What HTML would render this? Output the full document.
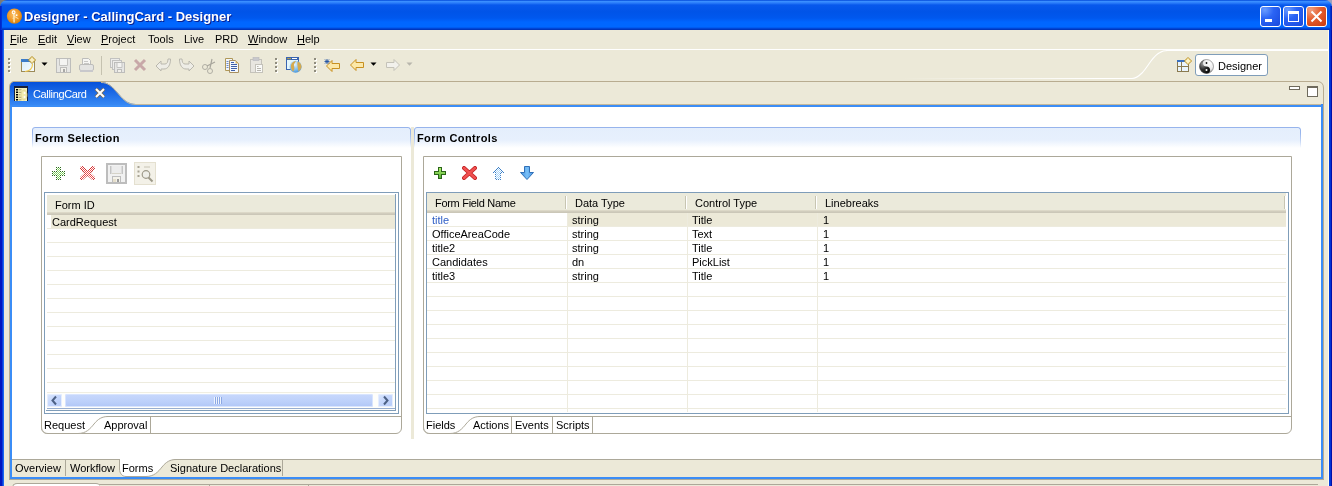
<!DOCTYPE html>
<html><head><meta charset="utf-8">
<style>
*{margin:0;padding:0;box-sizing:border-box}
body{will-change:transform}
html,body{width:1332px;height:486px;overflow:hidden;background:#ECE9D8;font-family:"Liberation Sans",sans-serif;font-size:11px;color:#000}
.a{position:absolute}
.t{position:absolute;white-space:nowrap;line-height:13px;font-size:11px}
#title{left:0;top:0;width:1332px;height:30px;border-radius:7px 7px 0 0;
 background:linear-gradient(#0046D8 0px,#3A8EFF 1.5px,#2A7CFA 3px,#0858EC 5px,#0054E8 12px,#0058EE 18px,#0066FF 22px,#0068FF 27px,#0050E4 28px,#003CC8 29px,#0030B0 30px)}
#corner{left:0;top:0;width:8px;height:8px;background:#7a7a7a}
.tb{position:absolute;top:6px;width:21px;height:21px;border:1px solid #fff;border-radius:3px}
.hl{position:absolute;height:1px}
.vl{position:absolute;width:1px}
.dots{position:absolute;width:3px}
.dots i{position:absolute;left:0;width:2px;height:2px;background:#8f8c7e;box-shadow:1px 1px 0 #fff}
.row{position:absolute;height:1px;background:#EDEBDE}
</style></head><body>
<!-- title bar -->
<div class="a" id="corner"></div><div class="a" style="left:1324px;top:0;width:8px;height:8px;background:#9aa0c0"></div>
<div class="a" id="title"></div>
<!-- app icon -->
<svg class="a" style="left:6px;top:8px" width="17" height="17">
 <defs><radialGradient id="ico" cx="0.45" cy="0.4" r="0.6"><stop offset="0" stop-color="#FBC068"/><stop offset="0.6" stop-color="#F09A28"/><stop offset="1" stop-color="#D8800A"/></radialGradient></defs>
 <circle cx="8.4" cy="8.1" r="7.6" fill="url(#ico)"/>
 <circle cx="7.6" cy="4.3" r="1.4" fill="none" stroke="#fff" stroke-width="1.1"/>
 <path d="M7.9 5.8 L8.1 14.5" stroke="#FFF4D0" stroke-width="1.2"/>
 <path d="M8 8.2 L12.5 10.8" stroke="#FFE8B0" stroke-width="0.9"/>
 <rect x="9.8" y="6.4" width="1.6" height="1.6" fill="#fff"/>
 <path d="M6.5 10.3 H8" stroke="#FFE8B0" stroke-width="0.8"/>
</svg>
<div class="t" style="left:24px;top:9px;font-size:13px;line-height:16px;font-weight:bold;color:#fff;text-shadow:1px 1px 0 #0A1F8F">Designer - CallingCard - Designer</div>
<!-- title buttons -->
<div class="tb" style="left:1260px;background:radial-gradient(circle at 20% 15%,#6A9CFF 0,#2B64F5 40%,#1848DC 100%)"><div class="a" style="left:4px;top:12px;width:7px;height:3px;background:#fff"></div></div>
<div class="tb" style="left:1283px;background:radial-gradient(circle at 20% 15%,#6A9CFF 0,#2B64F5 40%,#1848DC 100%)"><div class="a" style="left:4px;top:4px;width:11px;height:11px;border:1px solid #fff;border-top-width:3px"></div></div>
<div class="tb" style="left:1306px;background:radial-gradient(circle at 20% 15%,#F0A080 0,#E45C2C 45%,#C83A0E 100%)"><svg class="a" style="left:3px;top:3px" width="13" height="13"><path d="M1.5 1.5 L11.5 11.5 M11.5 1.5 L1.5 11.5" stroke="#fff" stroke-width="2"/></svg></div>
<!-- frame sides -->
<div class="a" style="left:0;top:30px;width:4px;height:456px;background:linear-gradient(90deg,#0016C0 0,#0016C0 2px,#0A3CDC 2px,#0A3CDC 3px,#1A68F0 3px)"></div><div class="a" style="left:0;top:6px;width:2px;height:24px;background:linear-gradient(90deg,#0020C8,#0038D8)"></div><div class="a" style="left:1330px;top:6px;width:2px;height:24px;background:linear-gradient(90deg,#0040D8,#0018B0)"></div>
<div class="a" style="left:1328px;top:30px;width:4px;height:456px;background:linear-gradient(90deg,#FFFBEF 0,#FFFBEF 1px,#0040E0 1px,#0030D0 3px,#0010A8 3px)"></div>

<!-- menu bar -->
<div class="t" style="left:10px;top:33px"><u>F</u>ile</div>
<div class="t" style="left:38px;top:33px"><u>E</u>dit</div>
<div class="t" style="left:67px;top:33px"><u>V</u>iew</div>
<div class="t" style="left:101px;top:33px"><u>P</u>roject</div>
<div class="t" style="left:148px;top:33px">Tools</div>
<div class="t" style="left:184px;top:33px">Live</div>
<div class="t" style="left:215px;top:33px">PRD</div>
<div class="t" style="left:248px;top:33px"><u>W</u>indow</div>
<div class="t" style="left:297px;top:33px"><u>H</u>elp</div>
<div class="hl" style="left:4px;top:49px;width:1324px;background:#fff"></div>

<!-- coolbar -->
<div class="hl" style="left:900px;top:78px;width:232px;background:linear-gradient(90deg,rgba(255,255,255,0),#fff 85%)"></div>
<svg class="a" style="left:1128px;top:48px" width="42" height="32"><path d="M0 30.5 L4 30.5 C8 30.5 11 28 14 25 C17 22 20 17 23 13 C26 9 29 6 32 4.5 C34 3 36 2.5 40 2.5 L42 2.5" stroke="#fff" stroke-width="1.1" fill="none"/></svg>
<div class="hl" style="left:1166px;top:50px;width:162px;background:#fff"></div>
<div class="hl" style="left:14px;top:81px;width:1304px;background:#ACA899"></div>

<!-- toolbar grips -->
<div class="dots" style="left:8px;top:58px;height:14px"><i style="top:0"></i><i style="top:4px"></i><i style="top:8px"></i><i style="top:12px"></i></div>
<div class="dots" style="left:275px;top:58px;height:14px"><i style="top:0"></i><i style="top:4px"></i><i style="top:8px"></i><i style="top:12px"></i></div>
<div class="dots" style="left:314px;top:58px;height:14px"><i style="top:0"></i><i style="top:4px"></i><i style="top:8px"></i><i style="top:12px"></i></div>
<!-- new -->
<svg class="a" style="left:20px;top:56px" width="18" height="17">
 <defs><linearGradient id="nw" x1="0" y1="0" x2="1" y2="1"><stop offset="0" stop-color="#D8EEFA"/><stop offset="1" stop-color="#F8FCFF"/></linearGradient></defs>
 <rect x="1.5" y="3.5" width="13" height="12" fill="url(#nw)" stroke="#9C8A58"/>
 <rect x="1" y="3" width="10" height="3" fill="#3C7CC8"/>
 <path d="M12 0.5 L15.5 4 L12 7.5 L8.5 4 Z" fill="#F0E0A0" stroke="#B08818"/>
 <path d="M12 1.5 V6.5 M9.5 4 H14.5" stroke="#FFF8D8" stroke-width="0.8"/>
 <path d="M12.5 8 C12.5 12 10 15 5 15.5" stroke="#F0C850" stroke-width="1.2" fill="none"/>
</svg>
<svg class="a" style="left:41px;top:62px" width="7" height="5"><path d="M0.5 0.5 L6.5 0.5 L3.5 3.8 Z" fill="#000"/></svg>
<!-- save (disabled) -->
<svg class="a" style="left:55px;top:57px" width="17" height="17">
 <rect x="1.5" y="1.5" width="14" height="14" fill="#E6E6E4" stroke="#BDBDBB"/>
 <path d="M4.5 2 V8.5 H12.5 V2" fill="#F4F4F2" stroke="#C4C4C2"/>
 <rect x="5.5" y="10.5" width="6" height="5" fill="#F2F0EA" stroke="#BDBDBB"/>
 <rect x="8" y="12" width="2" height="3" fill="#A8A8A6"/>
</svg>
<!-- print -->
<svg class="a" style="left:78px;top:57px" width="17" height="17">
 <path d="M4.5 8 V1.5 H10.5 L12.5 3.5 V8" fill="#F6F6F4" stroke="#BDBDBB"/>
 <path d="M6 4.5 H10 M6 6.5 H11" stroke="#C8C8C6"/>
 <rect x="1.5" y="7.5" width="14" height="6" rx="1.5" fill="#E4E4E2" stroke="#BDBDBB"/>
 <rect x="2" y="13" width="13" height="2" fill="#C8C8CC"/>
</svg>
<div class="vl" style="left:101px;top:56px;height:19px;background:#C5C2B0"></div>
<!-- save all -->
<svg class="a" style="left:109px;top:57px" width="17" height="17">
 <rect x="1.5" y="1.5" width="9" height="9" fill="#EDEDEB" stroke="#C2C2C0"/>
 <rect x="3.5" y="3.5" width="9" height="9" fill="#EDEDEB" stroke="#C2C2C0"/>
 <rect x="5.5" y="5.5" width="10" height="10" fill="#E6E6E4" stroke="#BDBDBB"/>
 <path d="M8 6 V10.5 H13 V6" fill="#F4F4F2" stroke="#C4C4C2"/>
 <rect x="8.5" y="12.5" width="4" height="3" fill="#F2F0EA" stroke="#BDBDBB"/>
</svg>
<!-- delete (disabled) -->
<svg class="a" style="left:133px;top:58px" width="15" height="14"><path d="M2 2 L12 12 M12 2 L2 12" stroke="#C8A8A8" stroke-width="3"/></svg>
<!-- undo -->
<svg class="a" style="left:155px;top:57px" width="17" height="16"><path d="M1 9 L6 4 L6 7 L10 7 C12 7 13 5 13 2 L15.5 2 C15.5 8 13 12 9 12 L6 12 L6 14 Z" fill="#EEEDE6" stroke="#BAB8AE"/></svg>
<!-- redo -->
<svg class="a" style="left:178px;top:57px" width="17" height="16"><path d="M16 9 L11 4 L11 7 L7 7 C5 7 4 5 4 2 L1.5 2 C1.5 8 4 12 8 12 L11 12 L11 14 Z" fill="#EEEDE6" stroke="#BAB8AE"/></svg>
<!-- cut -->
<svg class="a" style="left:201px;top:57px" width="16" height="17"><circle cx="4" cy="10" r="2.5" fill="none" stroke="#B0AEA4"/><circle cx="9" cy="14" r="2.5" fill="none" stroke="#B0AEA4"/><path d="M6 9 L14 5 M9 11 L11 2" stroke="#A8A69C" stroke-width="1.2"/></svg>
<!-- copy -->
<svg class="a" style="left:224px;top:57px" width="17" height="17">
 <path d="M1.5 1.5 L8.5 1.5 L8.5 13.5 L1.5 13.5 Z" fill="#F2F6FC" stroke="#B09858"/>
 <path d="M5.5 3.5 L11.5 3.5 L14.5 6.5 L14.5 15.5 L5.5 15.5 Z" fill="#F4F8FE" stroke="#A89060"/>
 <path d="M11.5 3.5 L11.5 6.5 L14.5 6.5 Z" fill="#D8B868"/>
 <path d="M7 5.5 H10 M7 7.5 H13 M7 9.5 H13 M7 11.5 H13 M7 13.5 H11" stroke="#4060A8"/>
 <path d="M2.5 4.5 H4.5 M2.5 6.5 H4.5 M2.5 8.5 H4.5 M2.5 10.5 H4.5" stroke="#6E8AC8"/>
</svg>
<!-- paste (disabled) -->
<svg class="a" style="left:249px;top:57px" width="16" height="17">
 <rect x="1.5" y="2.5" width="11" height="13" fill="#E8E6E0" stroke="#C4C2BA"/>
 <rect x="4" y="0.5" width="6" height="3" fill="#C8C8CC" stroke="#B8B8BC" stroke-width="0.6"/>
 <rect x="6.5" y="7.5" width="7" height="8" fill="#FAFAF8" stroke="#C4C2BA"/>
 <path d="M8 9.5 H9.5 M8 11.5 H12 M8 13.5 H12" stroke="#B8B6AE"/>
</svg>
<!-- web -->
<svg class="a" style="left:285px;top:56px" width="18" height="18">
 <defs><radialGradient id="gl" cx="0.4" cy="0.3" r="0.8"><stop offset="0" stop-color="#E8F6FF"/><stop offset="0.6" stop-color="#7CBCF0"/><stop offset="1" stop-color="#3A88D0"/></radialGradient></defs>
 <rect x="1.5" y="1.5" width="12" height="12" fill="#E4F6FC" stroke="#3A64B0"/>
 <rect x="1" y="1" width="13" height="3" fill="#3A64B0"/>
 <rect x="2.5" y="2" width="1.2" height="1.2" fill="#F0C020"/><rect x="4.5" y="2" width="1.2" height="1.2" fill="#F0C020"/><rect x="7" y="2" width="5" height="1" fill="#fff"/>
 <circle cx="10.6" cy="10.7" r="6" fill="url(#gl)"/>
 <path d="M6 9 C7 6 9 5 11 5 C10 7 8.5 8 9 10 C10 12 9 15 8 15.5 C6.5 14 5.5 11 6 9 Z" fill="#D4AA50"/>
 <path d="M12.5 5.5 C15 6 16.5 8.5 16.5 11 C16 13 14.5 15 13.5 15.5 C13 13 12 10 12.5 5.5 Z" fill="#D4AA50"/>
</svg>
<!-- last edit -->
<svg class="a" style="left:324px;top:58px" width="18" height="16">
 <path d="M2.5 8 L8 2.5 L8 5.5 L15.5 5.5 L15.5 10.5 L8 10.5 L8 13.5 Z" fill="#FCE8A8" stroke="#C89020"/>
 <path d="M3 1 V6 M0.5 3.5 H5.5 M1 1.5 L5 5.5 M5 1.5 L1 5.5" stroke="#2050A0" stroke-width="0.9"/>
</svg>
<!-- back -->
<svg class="a" style="left:349px;top:58px" width="16" height="15"><path d="M1.5 7 L7 1.5 L7 4.5 L14.5 4.5 L14.5 9.5 L7 9.5 L7 12.5 Z" fill="#FCE8A8" stroke="#C89020"/></svg>
<svg class="a" style="left:370px;top:62px" width="7" height="5"><path d="M0.5 0.5 L6.5 0.5 L3.5 3.8 Z" fill="#000"/></svg>
<!-- forward disabled -->
<svg class="a" style="left:385px;top:58px" width="16" height="15"><path d="M14.5 7 L9 1.5 L9 4.5 L1.5 4.5 L1.5 9.5 L9 9.5 L9 12.5 Z" fill="#F2F1EC" stroke="#C4C2B8"/></svg>
<svg class="a" style="left:406px;top:62px" width="7" height="5"><path d="M0.5 0.5 L6.5 0.5 L3.5 3.8 Z" fill="#B8B6AC"/></svg>
<!-- perspective -->
<svg class="a" style="left:1176px;top:57px" width="16" height="16">
 <rect x="1.5" y="3.5" width="11" height="11" fill="#EAF4FC" stroke="#8A7A50"/>
 <rect x="1" y="3" width="12" height="2" fill="#3A70C0"/>
 <path d="M5.5 5 V14 M2 9.5 H12" stroke="#8A7A50"/>
 <path d="M12 0.5 L15.5 4 L12 7.5 L8.5 4 Z" fill="#F8E8A8" stroke="#B88A18"/><path d="M12 1.5 V6.5 M9.5 4 H14.5" stroke="#FFFBE0" stroke-width="0.8"/>
</svg>
<div class="a" style="left:1195px;top:54px;width:73px;height:22px;border:1px solid #7F9DB9;border-radius:3px;background:#fff"></div>
<svg class="a" style="left:1199px;top:59px" width="16" height="16">
 <defs><radialGradient id="yw" cx="0.7" cy="0.25" r="0.8"><stop offset="0" stop-color="#fff"/><stop offset="0.55" stop-color="#E8E8E8"/><stop offset="1" stop-color="#707070"/></radialGradient>
 <radialGradient id="yb" cx="0.3" cy="0.3" r="0.9"><stop offset="0" stop-color="#9a9a9a"/><stop offset="0.45" stop-color="#303030"/><stop offset="1" stop-color="#000"/></radialGradient></defs>
 <circle cx="7.5" cy="7.5" r="7" fill="url(#yw)"/>
 <path d="M7.5 0.5 A7 7 0 0 0 7.5 14.5 A3.5 3.5 0 0 0 7.5 7.5 A3.5 3.5 0 0 1 7.5 0.5 Z" fill="url(#yb)"/>
 <circle cx="7.5" cy="4" r="0.9" fill="#111"/><circle cx="7.5" cy="11" r="1" fill="#fff"/>
 <circle cx="7.5" cy="7.5" r="7" fill="none" stroke="#555" stroke-width="0.5"/>
</svg>
<div class="t" style="left:1218px;top:60px">Designer</div>

<!-- editor folder -->
<svg class="a" style="left:0;top:78px" width="1332" height="410">
 <defs><linearGradient id="tabg" x1="0" y1="0" x2="0" y2="1"><stop offset="0" stop-color="#0550DA"/><stop offset="1" stop-color="#3B8DF6"/></linearGradient></defs>
 <!-- outer border with rounded top-right -->
 <path d="M9.5 402 L9.5 9 C9.5 6 11 3.5 14 3.5 L1317 3.5 Q1323.5 3.5 1323.5 10 L1323.5 401.5 L9.5 401.5" fill="none" stroke="#B8AC90"/>
 <!-- selected tab -->
 <path d="M10 29 L10 9 C10 6.5 11.5 4 14 4 L101 4 C108 4 112 8 118 15 C124 22 128 26 136 26 L1323 26 L1323 29 Z" fill="url(#tabg)"/>
 <path d="M101 4.5 C108 4.5 112 8.5 118 15.5 C124 22.5 128 26.5 136 26.5 L1321 26.5" fill="none" stroke="#C4B89C"/>
</svg>
<div class="a" style="left:10px;top:105px;width:1313px;height:374px;border:2px solid #3B8DF6;border-top-width:2px;border-bottom-width:2px;background:#fff"></div>
<!-- tab icon -->
<svg class="a" style="left:14px;top:86px" width="14" height="15">
 <rect x="0" y="0" width="14" height="15" fill="#16203C"/>
 <rect x="1" y="2" width="12" height="13" fill="#F4F0B8"/>
 <g fill="#000"><rect x="2" y="3" width="2" height="1.5"/><rect x="2" y="5.5" width="2" height="1.5"/><rect x="2" y="8" width="2" height="1.5"/><rect x="2" y="10.5" width="2" height="1.5"/><rect x="2" y="13" width="2" height="1.5"/></g>
 <g fill="#A8A070"><rect x="4.5" y="3.3" width="3" height="1"/><rect x="4.5" y="5.8" width="3" height="1"/><rect x="4.5" y="8.3" width="2" height="1"/><rect x="4.5" y="10.8" width="3" height="1"/><rect x="4.5" y="13.3" width="3" height="1"/></g>
 <ellipse cx="10" cy="9" rx="3" ry="5" fill="#F0ECB0" stroke="#D8D090" stroke-width="0.8"/>
 <circle cx="10.5" cy="7" r="1" fill="#fff"/><circle cx="10.5" cy="11" r="1" fill="#fff"/>
</svg>
<div class="t" style="left:33px;top:88px;color:#fff;letter-spacing:-0.35px">CallingCard</div>
<svg class="a" style="left:94px;top:87px" width="12" height="12"><path d="M2 2 L10 10 M10 2 L2 10" stroke="#7a6a50" stroke-width="3.4"/><path d="M2 2 L10 10 M10 2 L2 10" stroke="#fff" stroke-width="2"/></svg>
<!-- min / max view -->
<div class="a" style="left:1289px;top:86px;width:11px;height:4px;border:1px solid #6E6A5C;background:#fff"></div>
<div class="a" style="left:1307px;top:86px;width:11px;height:11px;border:1px solid #6E6A5C;border-top-width:2px;background:#fff"></div>

<!-- bottom page tabs -->
<div class="a" style="left:12px;top:459px;width:1309px;height:18px;background:#ECE9D8;border-top:1px solid #ACA899"></div>
<svg class="a" style="left:110px;top:458px" width="72" height="20"><path d="M9.5 0 L9.5 11 C9.5 15 12 18.5 16 18.5 L36 18.5 C44 18.5 48 14 52 9 C56 4 60 1.5 66 1.5 L72 1.5 L72 0 Z" fill="#fff"/><path d="M9.5 1 L9.5 11 C9.5 15 12 18.5 16 18.5 L36 18.5 C44 18.5 48 14 52 9 C56 4 60 1.5 66 1.5 L72 1.5" fill="none" stroke="#ACA899"/></svg>
<div class="vl" style="left:65px;top:460px;height:16px;background:#ACA899"></div>
<div class="vl" style="left:282px;top:460px;height:16px;background:#ACA899"></div>
<div class="t" style="left:15px;top:462px">Overview</div>
<div class="t" style="left:70px;top:462px">Workflow</div>
<div class="t" style="left:122px;top:462px">Forms</div>
<div class="t" style="left:170px;top:462px">Signature Declarations</div>
<div class="hl" style="left:9px;top:479px;width:1315px;background:#ACA899"></div>
<!-- bottom panel start -->
<div class="hl" style="left:98px;top:484px;width:1220px;background:#ACA899"></div>
<div class="a" style="left:12px;top:483px;width:88px;height:5px;background:#fff;border-top:1px solid #ACA899;border-left:1px solid #ACA899;border-radius:5px 4px 0 0"></div>
<div class="vl" style="left:209px;top:484px;height:3px;background:#ACA899"></div>
<div class="vl" style="left:308px;top:484px;height:3px;background:#ACA899"></div>
<div class="a" style="left:411px;top:127px;width:3px;height:312px;background:#ECE9D8"></div>
<div class="a" style="left:32px;top:127px;width:379px;height:21px;border-radius:3px 3px 0 0;background:linear-gradient(#E4EEFC,#E7F0FD 62%,#fff);"></div>
<div class="a" style="left:32px;top:127px;width:379px;height:21px;border-radius:3px 3px 0 0;border:1px solid #97B4EC;border-bottom:none;-webkit-mask-image:linear-gradient(#000 0,#000 6px,transparent 21px)"></div>
<div class="t" style="left:35px;top:132px;font-weight:bold;letter-spacing:0.38px">Form Selection</div>
<div class="a" style="left:414px;top:127px;width:887px;height:21px;border-radius:3px 3px 0 0;background:linear-gradient(#E4EEFC,#E7F0FD 62%,#fff);"></div>
<div class="a" style="left:414px;top:127px;width:887px;height:21px;border-radius:3px 3px 0 0;border:1px solid #97B4EC;border-bottom:none;-webkit-mask-image:linear-gradient(#000 0,#000 6px,transparent 21px)"></div>
<div class="t" style="left:417px;top:132px;font-weight:bold;letter-spacing:0.38px">Form Controls</div>
<div class="a" style="left:41px;top:156px;width:361px;height:278px;border:1px solid #ACA899;border-radius:0 0 6px 6px"></div>
<div class="hl" style="left:107px;top:416px;width:294px;background:#ACA899"></div>
<div class="a" style="left:423px;top:156px;width:869px;height:278px;border:1px solid #ACA899;border-radius:0 0 6px 6px"></div>
<div class="hl" style="left:479px;top:416px;width:812px;background:#ACA899"></div>
<div class="a" style="left:44px;top:192px;width:355px;height:222px;border:1px solid #7F9DB9"></div>
<div class="vl" style="left:395px;top:194px;height:217px;background:#7F9DB9"></div>
<div class="hl" style="left:46px;top:410px;width:350px;background:#7F9DB9"></div>
<div class="a" style="left:47px;top:195px;width:348px;height:20px;background:linear-gradient(#EBEADB 0,#EBEADB 17px,#E2DECD 17px,#D6D2C2 18px,#CBC7B8 19px)"></div>
<div class="t" style="left:55px;top:199px">Form ID</div>
<div class="a" style="left:51px;top:215px;width:344px;height:13px;background:#ECE9D8"></div>
<div class="t" style="left:52px;top:216px">CardRequest</div>
<div class="row" style="left:47px;top:228px;width:348px"></div>
<div class="row" style="left:47px;top:242px;width:348px"></div>
<div class="row" style="left:47px;top:256px;width:348px"></div>
<div class="row" style="left:47px;top:270px;width:348px"></div>
<div class="row" style="left:47px;top:284px;width:348px"></div>
<div class="row" style="left:47px;top:298px;width:348px"></div>
<div class="row" style="left:47px;top:312px;width:348px"></div>
<div class="row" style="left:47px;top:326px;width:348px"></div>
<div class="row" style="left:47px;top:340px;width:348px"></div>
<div class="row" style="left:47px;top:354px;width:348px"></div>
<div class="row" style="left:47px;top:368px;width:348px"></div>
<div class="row" style="left:47px;top:382px;width:348px"></div>
<div class="a" style="left:47px;top:392px;width:348px;height:18px;background:#FEFEFB;border-top:1px solid #F0EEE2"></div>
<div class="a" style="left:47px;top:394px;width:15px;height:13px;border-radius:2px;background:linear-gradient(135deg,#DCE8FE 0,#C4D6FC 50%,#B4CAF8 100%);box-shadow:inset 0 0 0 1px #E6EEFE"></div>
<svg class="a" style="left:47px;top:393px" width="15" height="15"><path d="M9 3.5 L5.5 7.5 L9 11.5" stroke="#4D6185" stroke-width="2" fill="none"/></svg>
<div class="a" style="left:378px;top:394px;width:15px;height:13px;border-radius:2px;background:linear-gradient(135deg,#DCE8FE 0,#C4D6FC 50%,#B4CAF8 100%);box-shadow:inset 0 0 0 1px #E6EEFE"></div>
<svg class="a" style="left:378px;top:393px" width="15" height="15"><path d="M6 3.5 L9.5 7.5 L6 11.5" stroke="#4D6185" stroke-width="2" fill="none"/></svg>
<div class="a" style="left:65px;top:394px;width:308px;height:13px;border-radius:2px;background:linear-gradient(#C8D8FC,#BCD0FA 60%,#B0C6F6);box-shadow:inset 0 0 0 1px #D8E4FE"></div><div class="hl" style="left:47px;top:408px;width:348px;background:#98AED0"></div>
<svg class="a" style="left:213px;top:397px" width="10" height="7"><path d="M1.5 0 V7 M3.5 0 V7 M5.5 0 V7 M7.5 0 V7" stroke="#EEF4FE" stroke-width="1"/><path d="M2.5 0 V7 M4.5 0 V7 M6.5 0 V7 M8.5 0 V7" stroke="#8CA8E4" stroke-width="1"/></svg>
<svg class="a" style="left:40px;top:415px" width="112" height="20"><path d="M1.5 1 L1.5 12 C1.5 15 4 18.5 8 18.5 L38 18.5 C46 18.5 50 14 54 9 C58 4 62 1.5 68 1.5 L110 1.5" fill="#fff" stroke="#ACA899"/><rect x="2" y="0" width="110" height="1" fill="none"/></svg>
<div class="vl" style="left:150px;top:417px;height:16px;background:#ACA899"></div>
<div class="t" style="left:44px;top:419px">Request</div>
<div class="t" style="left:104px;top:419px">Approval</div>
<div class="a" style="left:426px;top:192px;width:863px;height:222px;border:1px solid #7F9DB9"></div>
<div class="a" style="left:427px;top:193px;width:859px;height:20px;background:linear-gradient(#EBEADB 0,#EBEADB 17px,#E2DECD 17px,#D6D2C2 18px,#CBC7B8 19px)"></div>
<div class="vl" style="left:565px;top:196px;height:13px;background:#C7C5B2;box-shadow:1px 0 0 #fff"></div>
<div class="vl" style="left:685px;top:196px;height:13px;background:#C7C5B2;box-shadow:1px 0 0 #fff"></div>
<div class="vl" style="left:815px;top:196px;height:13px;background:#C7C5B2;box-shadow:1px 0 0 #fff"></div>
<div class="vl" style="left:1284px;top:196px;height:13px;background:#C7C5B2;box-shadow:1px 0 0 #fff"></div>
<div class="t" style="left:435px;top:197px;letter-spacing:-0.3px">Form Field Name</div>
<div class="t" style="left:575px;top:197px">Data Type</div>
<div class="t" style="left:695px;top:197px">Control Type</div>
<div class="t" style="left:825px;top:197px">Linebreaks</div>
<div class="a" style="left:567px;top:213px;width:719px;height:13px;background:#ECE9D8"></div>
<div class="row" style="left:427px;top:226px;width:859px"></div>
<div class="row" style="left:427px;top:240px;width:859px"></div>
<div class="row" style="left:427px;top:254px;width:859px"></div>
<div class="row" style="left:427px;top:268px;width:859px"></div>
<div class="row" style="left:427px;top:282px;width:859px"></div>
<div class="row" style="left:427px;top:296px;width:859px"></div>
<div class="row" style="left:427px;top:310px;width:859px"></div>
<div class="row" style="left:427px;top:324px;width:859px"></div>
<div class="row" style="left:427px;top:338px;width:859px"></div>
<div class="row" style="left:427px;top:352px;width:859px"></div>
<div class="row" style="left:427px;top:366px;width:859px"></div>
<div class="row" style="left:427px;top:380px;width:859px"></div>
<div class="row" style="left:427px;top:394px;width:859px"></div>
<div class="row" style="left:427px;top:408px;width:859px"></div>
<div class="vl" style="left:567px;top:213px;height:199px;background:#EDEBDE"></div>
<div class="vl" style="left:687px;top:213px;height:199px;background:#EDEBDE"></div>
<div class="vl" style="left:817px;top:213px;height:199px;background:#EDEBDE"></div>
<div class="t" style="left:432px;top:214px ;color:#2E5EC6">title</div>
<div class="t" style="left:572px;top:214px">string</div>
<div class="t" style="left:692px;top:214px">Title</div>
<div class="t" style="left:823px;top:214px">1</div>
<div class="t" style="left:432px;top:228px">OfficeAreaCode</div>
<div class="t" style="left:572px;top:228px">string</div>
<div class="t" style="left:692px;top:228px">Text</div>
<div class="t" style="left:823px;top:228px">1</div>
<div class="t" style="left:432px;top:242px">title2</div>
<div class="t" style="left:572px;top:242px">string</div>
<div class="t" style="left:692px;top:242px">Title</div>
<div class="t" style="left:823px;top:242px">1</div>
<div class="t" style="left:432px;top:256px">Candidates</div>
<div class="t" style="left:572px;top:256px">dn</div>
<div class="t" style="left:692px;top:256px">PickList</div>
<div class="t" style="left:823px;top:256px">1</div>
<div class="t" style="left:432px;top:270px">title3</div>
<div class="t" style="left:572px;top:270px">string</div>
<div class="t" style="left:692px;top:270px">Title</div>
<div class="t" style="left:823px;top:270px">1</div>
<svg class="a" style="left:422px;top:415px" width="100" height="20"><path d="M1.5 1 L1.5 12 C1.5 15 4 18.5 8 18.5 L28 18.5 C36 18.5 40 14 44 9 C48 4 52 1.5 58 1.5 L100 1.5" fill="#fff" stroke="#ACA899"/></svg>
<div class="vl" style="left:511px;top:417px;height:16px;background:#ACA899"></div>
<div class="vl" style="left:552px;top:417px;height:16px;background:#ACA899"></div>
<div class="vl" style="left:592px;top:417px;height:16px;background:#ACA899"></div>
<div class="t" style="left:426px;top:419px">Fields</div>
<div class="t" style="left:473px;top:419px">Actions</div>
<div class="t" style="left:515px;top:419px">Events</div>
<div class="t" style="left:556px;top:419px">Scripts</div>
<svg class="a" style="left:52px;top:167px;shape-rendering:crispEdges" width="13" height="13"><defs><pattern id="ck" width="2" height="2" patternUnits="userSpaceOnUse"><rect x="1" y="0" width="1" height="1" fill="#fff"/><rect x="0" y="1" width="1" height="1" fill="#fff"/></pattern></defs><path d="M4 0 H9 V4 H13 V9 H9 V13 H4 V9 H0 V4 H4 Z" fill="#2E6A1E"/><path d="M5 1 H8 V5 H12 V8 H8 V12 H5 V8 H1 V5 H5 Z" fill="#80D060"/><path d="M4 0 H9 V4 H13 V9 H9 V13 H4 V9 H0 V4 H4 Z" fill="url(#ck)"/></svg>
<svg class="a" style="left:80px;top:166px" width="15" height="14"><defs><pattern id="ck2" width="2" height="2" patternUnits="userSpaceOnUse"><rect x="1" y="0" width="1" height="1" fill="#fff"/><rect x="0" y="1" width="1" height="1" fill="#fff"/></pattern></defs><path d="M2 2 L13 12 M13 2 L2 12" stroke="#C83030" stroke-width="4" stroke-linecap="round"/><path d="M2 2 L13 12 M13 2 L2 12" stroke="#F05050" stroke-width="2" stroke-linecap="round"/><path d="M2 2 L13 12 M13 2 L2 12" stroke="url(#ck2)" stroke-width="4.5" stroke-linecap="round" style="shape-rendering:crispEdges"/></svg>
<svg class="a" style="left:106px;top:163px" width="21" height="21"><rect x="0" y="0" width="21" height="21" fill="#BDBDBD"/><rect x="2" y="2" width="17" height="17" fill="#F1F1F1"/><rect x="4" y="3" width="1.5" height="8" fill="#C4C4C4"/><rect x="15.5" y="3" width="1.5" height="8" fill="#C4C4C4"/><rect x="6" y="3" width="9" height="7" fill="#ECECEC"/><rect x="6" y="10" width="9" height="1" fill="#D6D3C8"/><rect x="6.5" y="13.5" width="8" height="6" fill="#F4F2EA" stroke="#BDBDBD"/><rect x="7" y="16" width="3" height="3" fill="#E6DFCC"/><rect x="11" y="16" width="2" height="3" fill="#9A9A9A"/></svg>
<svg class="a" style="left:134px;top:162px" width="22" height="23"><rect x="0.5" y="0.5" width="21" height="22" fill="#F3F1E8" stroke="#E4E0D0"/><path d="M3.5 5 h2 M3.5 9.5 h2 M3.5 14 h2" stroke="#A8A494" stroke-width="2"/><path d="M10 5 h6" stroke="#C8C4B4" stroke-width="1"/><circle cx="12" cy="12.5" r="3.8" fill="#EEEEE8" stroke="#9C9888" stroke-width="1.2"/><path d="M14.5 15.5 L18.5 19.5" stroke="#9C9888" stroke-width="2"/></svg>
<svg class="a" style="left:434px;top:167px;shape-rendering:crispEdges" width="13" height="13"><defs><linearGradient id="pg" x1="0" y1="0" x2="0" y2="1"><stop offset="0" stop-color="#B0F070"/><stop offset="1" stop-color="#58B038"/></linearGradient></defs><path d="M4 0 H8 V4 H12 V8 H8 V12 H4 V8 H0 V4 H4 Z" fill="#2A6418"/><path d="M5 1 H7 V5 H11 V7 H7 V11 H5 V7 H1 V5 H5 Z" fill="url(#pg)"/></svg>
<svg class="a" style="left:462px;top:166px" width="15" height="14"><path d="M2 2 L13 12 M13 2 L2 12" stroke="#C02020" stroke-width="4" stroke-linecap="round"/><path d="M2 2 L13 12 M13 2 L2 12" stroke="#F05050" stroke-width="2.4" stroke-linecap="round"/></svg>
<svg class="a" style="left:491px;top:166px;shape-rendering:crispEdges" width="14" height="14"><defs><pattern id="ck3" width="2" height="2" patternUnits="userSpaceOnUse"><rect x="1" y="0" width="1" height="1" fill="#fff"/><rect x="0" y="1" width="1" height="1" fill="#fff"/></pattern></defs><path d="M7 0 L13 6 V7 H10 V14 H4 V7 H1 V6 Z" fill="#3C80C8"/><path d="M7 2 L11 6 H9 V13 H5 V6 H3 Z" fill="#A8D4F8"/><path d="M7 0 L13 6 V7 H10 V14 H4 V7 H1 V6 Z" fill="url(#ck3)"/></svg>
<svg class="a" style="left:520px;top:166px" width="14" height="15"><defs><linearGradient id="dg" x1="0" y1="0" x2="1" y2="0"><stop offset="0" stop-color="#3C88D8"/><stop offset="0.5" stop-color="#78C0F8"/><stop offset="1" stop-color="#4890E0"/></linearGradient></defs><path d="M4.5 0.5 H9.5 V6.5 H13.5 L7 13.5 L0.5 6.5 H4.5 Z" fill="url(#dg)" stroke="#3070B8"/></svg>
</body></html>
